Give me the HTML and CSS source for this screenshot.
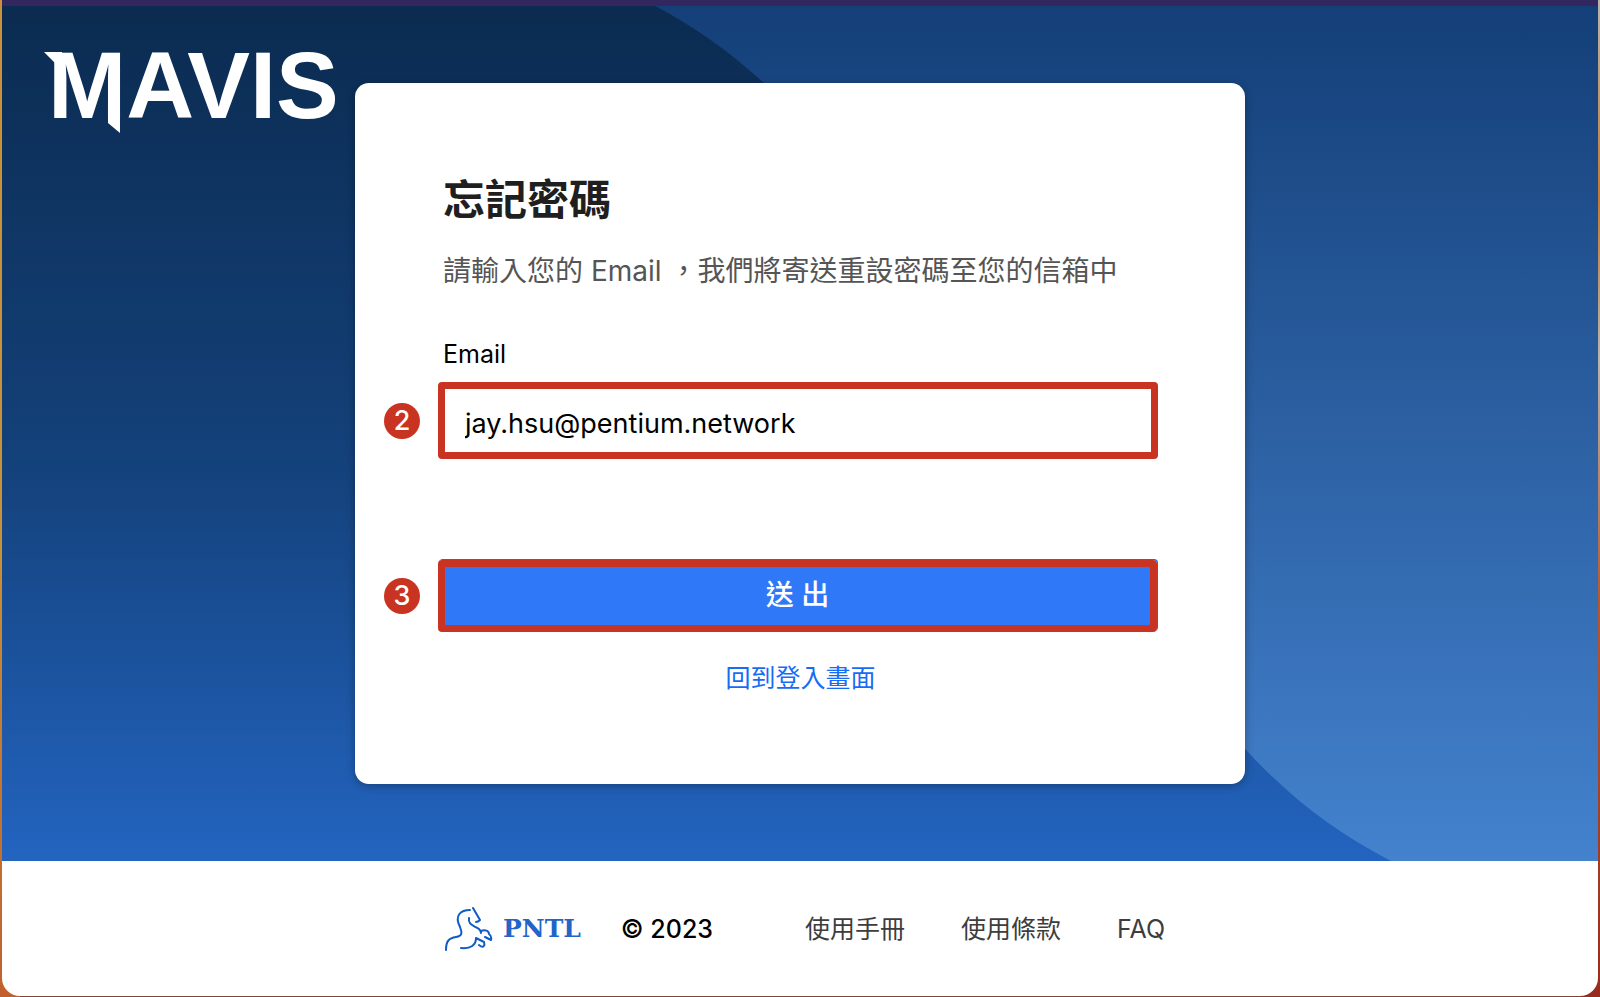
FILE: index.html
```html
<!DOCTYPE html>
<html lang="zh-Hant">
<head>
  <meta charset="UTF-8">
  <meta name="viewport" content="width=device-width, initial-scale=1.0">
  <title>忘記密碼 - MAVIS</title>
  <link rel="stylesheet" href="styles.css">
</head>
<body>
  <div class="window">
    <main class="hero">
      <svg class="hero-bg" viewBox="0 0 1596 854" preserveAspectRatio="none" aria-hidden="true">
        <defs>
          <linearGradient id="wave" x1="0" y1="0" x2="0" y2="1">
            <stop offset="0" stop-color="#143f78"/>
            <stop offset="1" stop-color="#4482ce"/>
          </linearGradient>
        </defs>
        <path fill="url(#wave)" d="M653 0 C692 20 728 46 762 77 C960 260 1040 520 1243 742 C1285 788 1332 825 1389 854 H1596 V0 Z"/>
      </svg>

      <div class="brand">
        MAVIS
        <!-- spur and tail on the M -->
        <svg class="brand-accent" viewBox="0 0 80 88" aria-hidden="true">
          <path d="M0 6 H18 V22 H11 V17 Z"/>
          <path d="M64 68 H76 V87 L64 77 Z"/>
        </svg>
      </div>

      <form class="card" onsubmit="return false">
        <h1>忘記密碼</h1>
        <p class="intro">請輸入您的 Email ，我們將寄送重設密碼至您的信箱中</p>

        <label for="email">Email</label>
        <div class="step step-email">
          <span class="step-number">2</span>
          <input type="email" id="email" value="jay.hsu@pentium.network">
        </div>

        <div class="step step-submit">
          <span class="step-number">3</span>
          <button type="submit">送 出</button>
        </div>

        <a class="back-link" href="#">回到登入畫面</a>
      </form>
    </main>

    <footer>
      <a class="pntl" href="#">
        <svg class="horse" viewBox="0 0 48 44" aria-hidden="true">
          <path d="M1 43 C1 34 4 31 11 30 C18 29 17 25 15 20 C9 8 16 3 25 3"/>
          <path d="M28 1 L35 13 Q33 15 31 15"/>
          <path d="M24 11 C23 18 28 18 34 22 Q36 24 36 26"/>
          <path d="M36 24 C40 22 44 24 44 27 Q47 29 46 33 L40 30"/>
          <path d="M16 41 C26 42 31 38 31 31 L39 35 C40 38 39 42 34 38"/>
        </svg>
        <span>PNTL</span>
      </a>
      <span class="copyright">© 2023</span>
      <nav>
        <a href="#">使用手冊</a>
        <a href="#">使用條款</a>
        <a href="#">FAQ</a>
      </nav>
    </footer>
  </div>
</body>
</html>
```
FILE: styles.css
```css
* {
  box-sizing: border-box;
}
body {
  margin: 0;
  min-height: 100vh;
  display: flex;
  padding: 0 2px 1px;
  background:
    linear-gradient(#c8923a, #c8923a 54%, #c0602c) left / 20px 100% no-repeat,
    linear-gradient(#b9b4ae, #c07a35 20%, #b9b4ae 36%, #b05a35 60%, #982b1d) right / 20px 100% no-repeat,
    #80463c;
  font-family: Inter, "Noto Sans CJK TC", sans-serif;
  color: #000;
}
.window {
  flex: 1;
  display: flex;
  flex-direction: column;
  border-top: 6px solid #32285f;
  border-radius: 0 0 18px 18px;
  overflow: hidden;
  background: #fff;
}
.hero {
  flex: 1;
  position: relative;
  display: flex;
  justify-content: center;
  align-items: center;
  background: linear-gradient(#0b2b50, #14427c 55%, #2364c0);
}
.hero-bg {
  position: absolute;
  width: 100%;
  height: 100%;
}
.brand {
  position: absolute;
  top: 40px;
  left: 46px;
  font: bold 94px/80px "Liberation Sans", sans-serif;
  color: #fff;
}
.brand-accent {
  position: absolute;
  top: 0;
  left: -4px;
  width: 80px;
  height: 88px;
  fill: #fff;
}
.card {
  position: relative;
  width: 890px;
  padding: 89px 87px 88px 88px;
  display: flex;
  flex-direction: column;
  background: #fff;
  border-radius: 14px;
  box-shadow: 0 2px 8px rgba(0, 0, 0, 0.3);
}
h1 {
  margin: 0;
  font-size: 42px;
  line-height: 56px;
  color: #1f1f1f;
}
.intro {
  margin: 23px 0 43px;
  font-size: 28px;
  line-height: 40px;
  color: #555;
}
label {
  font-size: 25px;
  line-height: 40px;
}
.step {
  position: relative;
  margin-left: -5px;
  border: 7px solid #c93321;
  border-radius: 4px;
}
.step-number {
  position: absolute;
  top: 50%;
  left: -61px;
  width: 36px;
  height: 36px;
  margin-top: -18px;
  border-radius: 50%;
  background: #c93321;
  color: #fff;
  font-size: 27px;
  font-weight: 500;
  line-height: 36px;
  text-align: center;
}
.step-email {
  margin-top: 8px;
}
.step-submit {
  margin-top: 101px;
  margin-right: 1px;
  box-shadow: 1px -1px 0 #166cf5;
}
input {
  display: block;
  width: 100%;
  height: 63px;
  padding: 6px 20px 0;
  border: 0;
  font: 27px Inter, sans-serif;
}
button {
  display: block;
  width: 100%;
  height: 58px;
  padding: 0 0 6px;
  border: 0;
  background: #2f78f8;
  color: #fff;
  font-family: inherit;
  font-size: 28px;
  font-weight: 500;
}
.back-link {
  margin-top: 28px;
  align-self: center;
  font-size: 25px;
  line-height: 36px;
  color: #166cf5;
  text-decoration: none;
}
footer {
  height: 135px;
  padding-left: 10px;
  display: flex;
  justify-content: center;
  align-items: center;
  gap: 40px;
  font-size: 25px;
  line-height: 36px;
}
footer a {
  color: #3d3d3d;
  text-decoration: none;
}
footer .pntl {
  display: flex;
  align-items: center;
  gap: 10px;
  font: bold 25px "DejaVu Serif", serif;
  color: #2364c8;
}
.horse {
  width: 48px;
  height: 44px;
  fill: none;
  stroke: #0f5bc8;
  stroke-width: 2;
  stroke-linecap: round;
  stroke-linejoin: round;
}
.copyright {
  font-weight: 500;
}
nav {
  display: flex;
  align-items: baseline;
  gap: 56px;
  margin-left: 52px;
}
```
